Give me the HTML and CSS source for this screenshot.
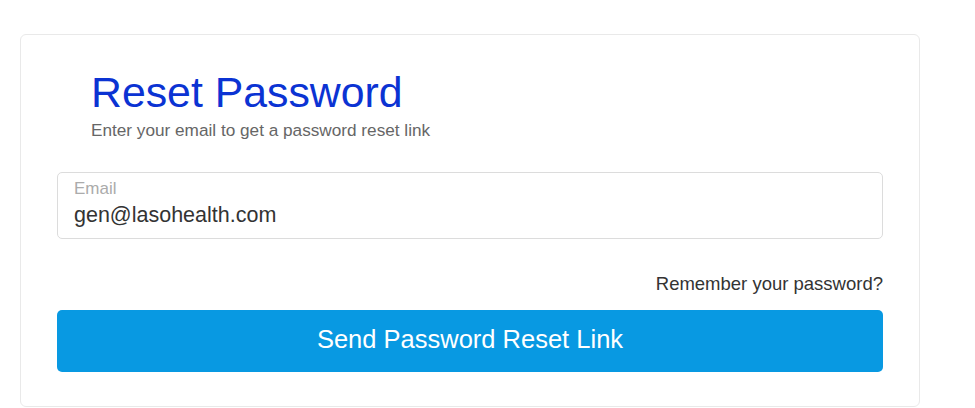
FILE: index.html
```html
<!DOCTYPE html>
<html lang="en">
<head>
<meta charset="utf-8">
<title>Reset Password</title>
<link rel="stylesheet" href="styles.css">
</head>
<body>
  <div class="card">
    <div class="header">
      <h1 class="title">Reset Password</h1>
      <p class="subtitle">Enter your email to get a password reset link</p>
    </div>
    <div class="field">
      <label class="field-label" for="email">Email</label>
      <input class="field-input" id="email" type="text" value="gen@lasohealth.com">
    </div>
    <div class="links">
      <a class="remember" href="#">Remember your password?</a>
    </div>
    <button class="submit" type="button">Send Password Reset Link</button>
  </div>
</body>
</html>
```
FILE: styles.css
```css
html, body {
  margin: 0;
  padding: 0;
  background: #ffffff;
}

body {
  font-family: "Liberation Sans", Arial, sans-serif;
}

.card {
  box-sizing: border-box;
  width: 900px;
  margin: 34px 0 0 20px;
  padding: 32px 36px 34px;
  border: 1px solid #e9e9e9;
  border-radius: 6px;
  background: #ffffff;
  display: flex;
  flex-direction: column;
}

.header {
  padding-left: 34px;
}

.title {
  margin: 0;
  font-size: 42.8px;
  line-height: 51px;
  font-weight: 400;
  color: #0b33d3;
}

.subtitle {
  margin: 2px 0 0;
  font-size: 17.2px;
  line-height: 20px;
  color: #666666;
}

.field {
  margin-top: 32px;
  box-sizing: border-box;
  height: 67px;
  border: 1px solid #dcdcdc;
  border-radius: 5px;
  padding: 6px 16px 0;
  display: flex;
  flex-direction: column;
}

.field-label {
  font-size: 17px;
  line-height: 20px;
  color: #ababab;
}

.field-input {
  margin-top: 3px;
  padding: 0;
  border: none;
  outline: none;
  background: transparent;
  font-family: "Liberation Sans", Arial, sans-serif;
  font-size: 21.5px;
  line-height: 26px;
  height: 26px;
  color: #333333;
}

.links {
  margin-top: 34px;
  display: flex;
  justify-content: flex-end;
}

.remember {
  font-size: 18.5px;
  line-height: 22px;
  color: #333333;
  text-decoration: none;
}

.submit {
  margin-top: 15px;
  height: 62px;
  border: none;
  border-radius: 5px;
  background: #0899e2;
  color: #ffffff;
  font-family: "Liberation Sans", Arial, sans-serif;
  font-size: 25.5px;
  padding: 0 0 4px;
  cursor: pointer;
}
```
